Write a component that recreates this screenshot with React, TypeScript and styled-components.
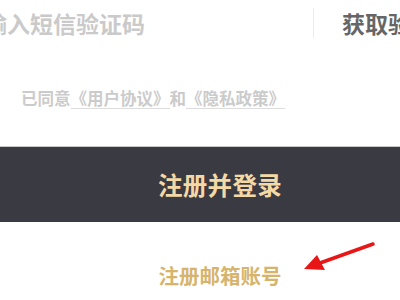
import React from 'react'
import styled, { createGlobalStyle } from 'styled-components'

const GlobalStyle = createGlobalStyle`
  html, body {
    margin: 0;
    padding: 0;
    background: #fff;
    overflow: hidden;
  }
  body {
    font-family: "Noto Sans CJK SC", "Noto Sans", sans-serif;
  }
`

const Page = styled.div`
  position: relative;
  width: 520px;
  margin-left: -40px;
  display: flex;
  flex-direction: column;
`

const InputRow = styled.div`
  display: flex;
  align-items: center;
  height: 46px;
  padding-left: 24px;
`

const CodeInput = styled.input`
  flex: 1;
  min-width: 0;
  border: none;
  outline: none;
  padding: 0;
  background: transparent;
  font-family: inherit;
  font-size: 23px;
  font-weight: 700;
  color: #333;
  &::placeholder {
    color: #cacaca;
  }
`

const Divider = styled.div`
  width: 1px;
  height: 30px;
  background: #ececec;
  margin-right: 28px;
`

const GetCode = styled.button`
  border: none;
  background: none;
  padding: 0;
  width: 138px;
  text-align: left;
  white-space: nowrap;
  overflow: hidden;
  font-family: inherit;
  font-size: 23px;
  font-weight: 700;
  color: #666;
`

const Agreement = styled.div`
  margin-top: 42px;
  padding-left: 61px;
  font-size: 16.5px;
  font-weight: 700;
  line-height: 20px;
  color: #cbcbcb;
  white-space: nowrap;
`

const DocLink = styled.span`
  display: inline-block;
  border-bottom: 1px solid #dcdcdc;
`

const SubmitButton = styled.button`
  margin-top: 37px;
  height: 76px;
  border: none;
  border-top: 1px solid #c9c9c9;
  background: #3a3b42;
  color: #f4d9a6;
  font-family: inherit;
  font-size: 24.5px;
  font-weight: 700;
  letter-spacing: 0.3px;
`

const EmailLink = styled.div`
  margin-top: 38px;
  text-align: center;
  font-size: 20.5px;
  font-weight: 700;
  color: #d6b46c;
`

const Arrow = styled.svg`
  position: absolute;
  left: 340px;
  top: 236px;
`

export default function App() {
  return (
    <>
      <GlobalStyle />
      <Page>
        <InputRow>
          <CodeInput placeholder='输入短信验证码' />
          <Divider />
          <GetCode>获取验证码</GetCode>
        </InputRow>
        <Agreement>
          已同意<DocLink>《用户协议》</DocLink>和<DocLink>《隐私政策》</DocLink>
        </Agreement>
        <SubmitButton>注册并登录</SubmitButton>
        <EmailLink>注册邮箱账号</EmailLink>
        <Arrow width='80' height='40' viewBox='0 0 80 40'>
          <line x1='73' y1='8' x2='20' y2='27' stroke='#e81616' strokeWidth='3.5' strokeLinecap='round' />
          <polygon points='4,33 17,19 25,34' fill='#e81616' />
        </Arrow>
      </Page>
    </>
  )
}
